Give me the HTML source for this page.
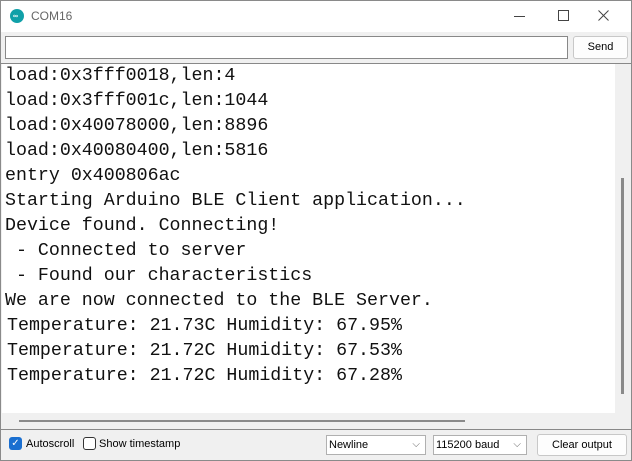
<!DOCTYPE html><html><head><style>
body{margin:0;width:632px;height:461px;overflow:hidden;background:#f0f0f0;font-family:"Liberation Sans",sans-serif;position:relative}
.win{position:absolute;left:0;top:0;width:630px;height:459px;border:1px solid #8a8a8a;background:#f0f0f0}
.tb{position:absolute;left:0;top:0;width:630px;height:31px;background:#fff}
.a{position:absolute}
.mono{font-family:"Liberation Mono",monospace;font-size:18.3px;color:#111;white-space:pre}
.sm{font-size:11px;color:#000}
</style></head><body><div class="win">
<div class="tb">
<div class="a" style="left:9px;top:8px;width:14px;height:14px;border-radius:50%;background:#10a0a8"></div>
<div class="a" style="left:12px;top:12px;color:#fff;font-size:7px;font-weight:bold">∞</div>
<div class="a" style="left:30px;top:8px;font-size:12px;color:#666">COM16</div>
<div class="a" style="left:513px;top:15px;width:11px;height:1px;background:#444"></div>
<div class="a" style="left:557px;top:9px;width:9px;height:9px;border:1px solid #444"></div>
<svg class="a" style="left:597px;top:9px" width="11" height="11"><path d="M0.5 0.5L10.5 10.5M10.5 0.5L0.5 10.5" stroke="#444" stroke-width="1"/></svg>
</div>
<div class="a" style="left:4px;top:35px;width:561px;height:21px;border:1px solid #888;background:#fff"></div>
<div class="a sm" style="left:572px;top:35px;width:53px;height:21px;border:1px solid #c8c8c8;border-radius:3px;background:#fdfdfd;text-align:center;line-height:21px">Send</div>
<div class="a" style="left:0;top:62px;width:630px;height:365px;border-top:1px solid #888;border-bottom:1px solid #888"></div>
<div class="a" style="left:1px;top:63px;width:613px;height:349px;background:#fff"></div>
<div class="a mono" style="left:4px;top:63px;line-height:25px">load:0x3fff0018,len:4
load:0x3fff001c,len:1044
load:0x40078000,len:8896
load:0x40080400,len:5816
entry 0x400806ac
Starting Arduino BLE Client application...
Device found. Connecting!
 - Connected to server
 - Found our characteristics
We are now connected to the BLE Server.
<span style="margin-left:2px">Temperature: 21.73C Humidity: 67.95%</span>
<span style="margin-left:2px">Temperature: 21.72C Humidity: 67.53%</span>
<span style="margin-left:2px">Temperature: 21.72C Humidity: 67.28%</span></div>
<div class="a" style="left:620px;top:177px;width:3px;height:216px;background:#8a8a8a"></div>
<div class="a" style="left:18px;top:419px;width:446px;height:2px;background:#8a8a8a"></div>
<div class="a" style="left:8px;top:436px;width:13px;height:13px;border-radius:3px;background:#1a6fd0;color:#fff;font-size:10px;line-height:13px;text-align:center">✓</div>
<div class="a sm" style="left:25px;top:437px">Autoscroll</div>
<div class="a" style="left:82px;top:436px;width:11px;height:11px;border:1px solid #333;border-radius:3px;background:#fff"></div>
<div class="a sm" style="left:98px;top:437px">Show timestamp</div>
<div class="a sm" style="left:325px;top:434px;width:96px;height:18px;border:1px solid #b0b0b0;background:#fff;line-height:18px;padding-left:2px">Newline<span style="position:absolute;right:5px;color:#666;font-size:10px">⌵</span></div>
<div class="a sm" style="left:432px;top:434px;width:90px;height:18px;border:1px solid #b0b0b0;background:#fff;line-height:18px;padding-left:2px">115200 baud<span style="position:absolute;right:5px;color:#666;font-size:10px">⌵</span></div>
<div class="a sm" style="left:536px;top:433px;width:88px;height:20px;border:1px solid #c8c8c8;border-radius:3px;background:#fdfdfd;text-align:center;line-height:20px">Clear output</div>
</div></body></html>
